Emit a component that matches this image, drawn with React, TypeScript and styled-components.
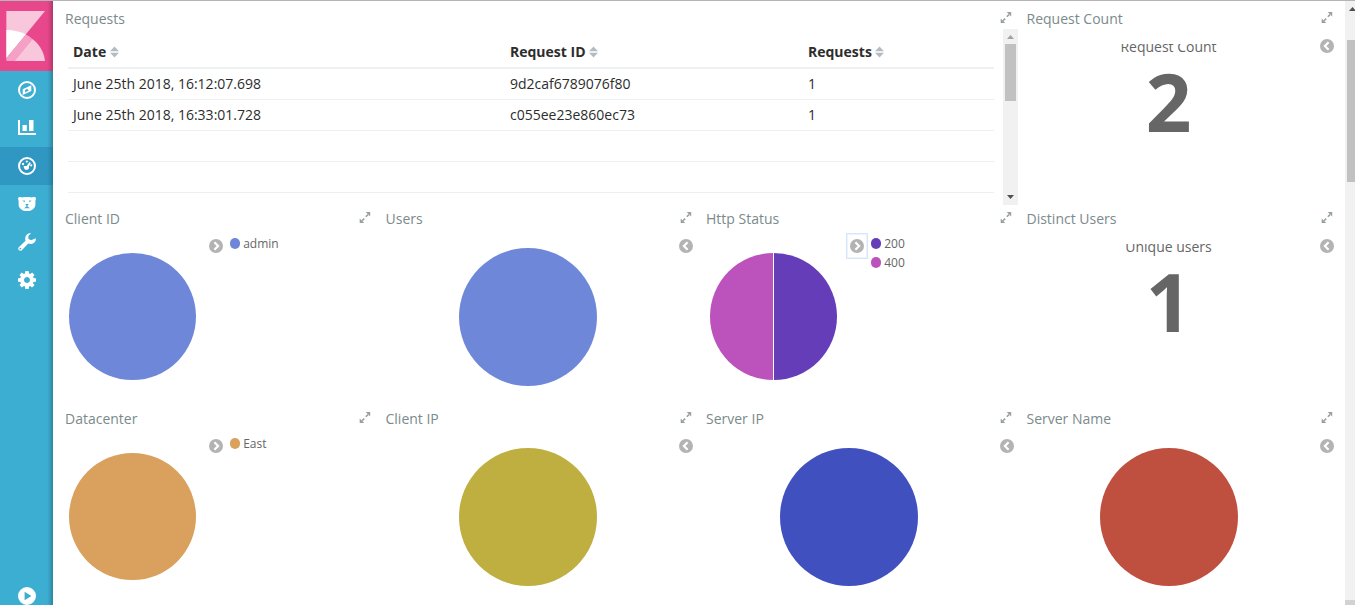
import React from 'react';
import styled, { createGlobalStyle } from 'styled-components';

const GlobalStyle = createGlobalStyle`
  *, *::before, *::after { box-sizing: border-box; }
  body {
    margin: 0;
    background: #fff;
    overflow: hidden;
    font-family: 'Open Sans', 'Noto Sans', sans-serif;
    font-size: 14px;
    color: #2d2d2d;
  }
`;

const Shell = styled.div`
  display: flex;
  height: 605px;
  overflow: hidden;
  border-top: 1px solid #b5b5b5;
`;

const Sidebar = styled.nav`
  display: flex;
  flex-direction: column;
  flex: none;
  width: 53px;
  height: 604px;
  background: linear-gradient(to left, rgba(0, 0, 0, 0.24), rgba(0, 0, 0, 0.1) 3px, rgba(0, 0, 0, 0) 6px), #3caed2;
`;

const LogoBox = styled.div`
  flex: none;
  height: 70px;
  padding: 10px 0 0 6px;
  background: linear-gradient(to left, rgba(0, 0, 0, 0.24), rgba(0, 0, 0, 0.1) 3px, rgba(0, 0, 0, 0) 6px), #e8488b;
  svg { display: block; }
`;

const NavItem = styled.a<{ $active?: boolean; $last?: boolean }>`
  display: flex;
  flex: none;
  align-items: center;
  height: 38px;
  padding-left: 18px;
  margin-top: ${p => (p.$last ? 'auto' : '0')};
  margin-bottom: ${p => (p.$last ? '-10px' : '0')};
  background: ${p => (p.$active ? 'rgba(20, 100, 155, 0.3)' : 'transparent')};
  color: #fff;
  svg { display: block; }
`;

const Dashboard = styled.main`
  display: grid;
  flex: none;
  grid-template-columns: repeat(4, 320.5px);
  grid-template-rows: repeat(3, 200px);
  width: 1292px;
  padding: 4px 0 0 7px;
`;

const PanelBox = styled.section<{ $wide?: boolean }>`
  display: flex;
  flex-direction: column;
  grid-column: span ${p => (p.$wide ? 3 : 1)};
  min-width: 0;
  overflow: hidden;
`;

const PanelHeader = styled.header`
  display: flex;
  flex: none;
  justify-content: space-between;
  height: 24px;
  padding: 0 9.5px 0 5px;
  color: #7b8a8b;
  line-height: 28px;
  white-space: nowrap;
  svg { display: block; margin-top: 7px; }
`;

const PanelBody = styled.div`
  display: flex;
  flex: 1;
  min-height: 0;
  padding-left: 5px;
`;

const Chart = styled.div<{ $compact?: boolean }>`
  display: flex;
  flex: none;
  align-items: center;
  justify-content: center;
  width: ${p => (p.$compact ? 135 : 285)}px;
  padding-bottom: ${p => (p.$compact ? 1 : 0)}px;
`;

const Toggle = styled.button<{ $compact?: boolean; $focused?: boolean }>`
  display: flex;
  flex: none;
  align-items: center;
  justify-content: center;
  width: 22px;
  height: 26px;
  margin: 4px 0 0 ${p => (p.$compact ? 4.7 : 4.5)}px;
  padding: 0;
  border: 1px solid ${p => (p.$focused ? '#d6e5fc' : 'transparent')};
  box-shadow: ${p => (p.$focused ? 'inset 0 0 0 1px #eef4fe' : 'none')};
  background: none;
  color: #b3b3b3;
`;

const Legend = styled.ul`
  margin: 5px 0 0 3px;
  padding: 0;
  list-style: none;
`;

const LegendItem = styled.li`
  display: flex;
  align-items: center;
  height: 19px;
  color: #666;
  font-size: 12px;
  line-height: 19px;
`;

const Swatch = styled.span<{ $color: string }>`
  width: 10.5px;
  height: 10.5px;
  margin-right: 3px;
  border-radius: 50%;
  background: ${p => p.$color};
`;

const Metric = styled.div`
  flex: none;
  width: 284px;
  height: 150px;
  margin: 15px 1px 0 0;
  overflow: hidden;
  color: #666;
  text-align: center;
`;

const MetricLabel = styled.div`
  margin-top: -7px;
  line-height: 20px;
`;

const MetricValue = styled.div`
  font-size: 80px;
  font-weight: 700;
  line-height: 88px;
`;

const TableArea = styled.div`
  display: flex;
  flex: 1;
  justify-content: space-between;
  min-height: 0;
  padding: 0 3.5px 0 8px;
`;

const Table = styled.div`
  width: 926px;
  padding-top: 7px;
`;

const Row = styled.div<{ $head?: boolean }>`
  display: grid;
  grid-template-columns: 437px 298px 1fr;
  height: ${p => (p.$head ? 33 : 31)}px;
  padding-left: 5px;
  border-bottom: ${p => (p.$head ? 2 : 1)}px solid #ecf0f1;
  font-weight: ${p => (p.$head ? 700 : 400)};
  line-height: ${p => (p.$head ? 32 : 30)}px;
`;

const HeadCell = styled.span`
  display: flex;
  align-items: center;
  gap: 3.5px;
`;

const Scrollbar = styled.div`
  display: flex;
  flex-direction: column;
  align-items: center;
  width: 15px;
  height: 176px;
  padding: 6px 0;
  background: #f1f1f1;
`;

const ScrollThumb = styled.div`
  width: 11px;
  height: 57px;
  margin: 5px 0 auto;
  background: #c1c1c1;
`;

const PageScrollbar = styled.aside`
  display: flex;
  flex: none;
  flex-direction: column;
  width: 10px;
  height: 604px;
  background: #f1f1f1;
  overflow: hidden;
  svg { flex: none; margin: 6px 0 0 4px; }
`;

const PageThumb = styled.div`
  flex: none;
  height: 142px;
  margin: 29px 0 auto 2px;
  background: #c1c1c1;
`;

const ScrollCorner = styled.div`
  flex: none;
  height: 5px;
  background: #d2d2d2;
`;

const Logo = () => (
  <svg width="39" height="50" viewBox="-0.4 0 39 50">
    <path d="M0 0H38.600L0 47Z" fill="#f9c7dc" />
    <path d="M0 19C7 19 14 20.5 19.5 23.5L0 47Z" fill="#fff" />
    <path d="M19.5 23.5C22 24.8 24 26.3 26 28L8 50H0V47Z" fill="#f4a1c5" />
    <path d="M26 28C34 34 37.600 42 38.600 50H8Z" fill="#f9c7dc" />
  </svg>
);

const CompassIcon = () => (
  <svg width="18" height="18" viewBox="0 0 18 18">
    <circle cx="9" cy="9" r="8" fill="none" stroke="currentColor" strokeWidth="2" />
    <path fillRule="evenodd" fill="currentColor" d="M13.3 4.2V10L4.7 14V8.2ZM7 9.3V11.4L10.8 9.4 9 7.7Z" />
  </svg>
);

const ChartIcon = () => (
  <svg width="18" height="18" viewBox="0 0 18 18">
    <path fill="currentColor" d="M0 1H2V14H18V16H0ZM4.5 6H8.800V12H4.5ZM11 1H15.5V12H11Z" />
  </svg>
);

const GaugeIcon = () => (
  <svg width="18" height="18" viewBox="0 0 18 18" fill="currentColor">
    <circle cx="9" cy="9" r="8" fill="none" stroke="currentColor" strokeWidth="2" />
    <circle cx="8.800" cy="4.600" r="1.1" />
    <circle cx="13.200" cy="8.400" r="1.100" />
    <circle cx="5" cy="7" r="1.2" />
    <path d="M11.5 5L12.8 6 10.900 9.4A2.600 2.600 0 1 1 5.900 10.800L5.600 8.900 8.700 9Z" />
  </svg>
);

const BearIcon = () => (
  <svg width="18" height="18" viewBox="0 0 18 18">
    <path
      fillRule="evenodd"
      fill="currentColor"
      d="M0 3.2C.6 2 2.6 1.8 4 2.5 7 1.9 11 1.9 14 2.5 15.4 1.8 17.4 2 18 3.2L17.4 6V9.4C17.2 13.4 14 16 9 16S.8 13.4.6 9.4V6ZM4.2 5.800L6.8 7.3V5.600ZM13.8 5.800L11.2 7.3V5.600ZM7.2 9 8.4 10.400V11.5L6 13.2H12L9.6 11.5V10.400L10.8 9Z"
    />
  </svg>
);

const WrenchIcon = () => (
  <svg width="18" height="18" viewBox="0 0 18 18">
    <path
      fillRule="evenodd"
      fill="currentColor"
      d="M13.2.3 10.4 2.7V5.7L13 7.3 17.8 5.2C18.3 8.4 15.8 11 12.5 11 11.6 11 10.9 10.8 10.3 10.5L3.8 17.2C2.9 18.1 1.8 18 .9 17.1 0 16.2-.1 15.1.8 14.2L7.5 7.7C6.2 3.8 9-.7 13.2.3ZM2.4 14.7A.9.9 0 1 0 2.4 16.5 .9.9 0 1 0 2.4 14.7Z"
    />
  </svg>
);

const GearIcon = () => (
  <svg width="18" height="18" viewBox="0 0 1536 1536">
    <path
      fill="currentColor"
      d="M1024 768q0-106-75-181t-181-75-181 75-75 181 75 181 181 75 181-75 75-181zm512-109v222q0 12-8 23t-20 13l-185 28q-19 54-39 91 35 50 107 138 10 12 10 25t-9 23q-27 37-99 108t-94 71q-12 0-26-9l-138-108q-44 23-91 38-16 136-29 186-7 28-36 28h-222q-14 0-24.500-8.500t-11.500-21.500l-28-184q-49-16-90-37l-141 107q-10 9-25 9-14 0-25-11-126-114-165-168-7-10-7-23 0-12 8-23 15-21 51-66.500t54-70.500q-27-50-41-99l-183-27q-13-2-21-12.500t-8-23.500v-222q0-12 8-23t19-13l186-28q14-46 39-92-40-57-107-138-10-12-10-24 0-10 9-23 26-36 98.500-107.500t94.500-71.500q13 0 26 10l138 107q44-23 91-38 16-136 29-186 7-28 36-28h222q14 0 24.500 8.500t11.500 21.500l28 184q49 16 90 37l142-107q9-9 24-9 13 0 25 10 129 119 165 170 7 8 7 22 0 12-8 23-15 21-51 66.500t-54 70.500q26 50 41 98l183 28q13 2 21 12.500t8 23.500z"
    />
  </svg>
);

const PlayIcon = () => (
  <svg width="18" height="18" viewBox="0 0 18 18">
    <path fillRule="evenodd" fill="currentColor" d="M9 0A9 9 0 1 0 9 18 9 9 0 1 0 9 0ZM6.6 4.8 13.4 9 6.6 13.2Z" />
  </svg>
);

const ExpandIcon = () => (
  <svg width="12" height="12" viewBox="0 0.4 12 12">
    <path d="M3 9.200 5.200 7M6.800 5.200 9 3" stroke="#979fa3" strokeWidth="1.500" fill="none" />
    <path d="M6.700.5H11.200V5ZM.7 7V11.500H5.200Z" fill="#979fa3" />
  </svg>
);

const ChevronIcon = ({ right = false }: { right?: boolean }) => (
  <svg width="14" height="14" viewBox="0 0 14 14">
    <circle cx="7" cy="7" r="7" fill="currentColor" />
    <path
      d={right ? 'M5.400 3.200 9.100 7 5.400 10.800' : 'M8.600 3.200 4.900 7 8.600 10.800'}
      fill="none"
      stroke="#fff"
      strokeWidth="2.200"
    />
  </svg>
);

const SortIcon = () => (
  <svg width="9" height="12" viewBox="0 0 9 12">
    <path d="M4.500.5 9 5.200H0ZM0 6.800H9L4.500 11.500Z" fill="#b4bcc2" />
  </svg>
);

const ArrowIcon = ({ down = false, color }: { down?: boolean; color: string }) => (
  <svg width="7" height="4" viewBox="0 0 7 4">
    <path d={down ? 'M0 0H7L3.500 4Z' : 'M3.500 0 7 4H0Z'} fill={color} />
  </svg>
);

type Slice = { label: string; color: string };

const Pie = ({ radius, slices }: { radius: number; slices: Slice[] }) => {
  const size = radius * 2;
  return (
    <svg width={size} height={size} viewBox={`0 0 ${size} ${size}`}>
      {slices.length === 1 ? (
        <circle cx={radius} cy={radius} r={radius} fill={slices[0].color} />
      ) : (
        <>
          <path d={`M${radius} 0A${radius} ${radius} 0 0 1 ${radius} ${size}Z`} fill={slices[0].color} />
          <path d={`M${radius} 0A${radius} ${radius} 0 0 0 ${radius} ${size}Z`} fill={slices[1].color} />
          <path d={`M${radius} 0V${size}`} stroke="#fff" strokeWidth="1" />
        </>
      )}
    </svg>
  );
};

type PanelProps = { title: string; wide?: boolean; children: React.ReactNode };

const Panel = ({ title, wide, children }: PanelProps) => (
  <PanelBox $wide={wide}>
    <PanelHeader>
      <span>{title}</span>
      <ExpandIcon />
    </PanelHeader>
    {children}
  </PanelBox>
);

type PiePanelProps = { title: string; slices: Slice[]; legend?: boolean; focused?: boolean };

const PiePanel = ({ title, slices, legend = false, focused }: PiePanelProps) => (
  <Panel title={title}>
    <PanelBody>
      <Chart $compact={legend}>
        <Pie radius={legend ? 63.5 : 69} slices={slices} />
      </Chart>
      <Toggle $compact={legend} $focused={focused} aria-label="Toggle legend">
        <ChevronIcon right={legend} />
      </Toggle>
      {legend && (
        <Legend>
          {slices.map(slice => (
            <LegendItem key={slice.label}>
              <Swatch $color={slice.color} />
              {slice.label}
            </LegendItem>
          ))}
        </Legend>
      )}
    </PanelBody>
  </Panel>
);

const MetricPanel = ({ title, label, value }: { title: string; label: string; value: number }) => (
  <Panel title={title}>
    <PanelBody>
      <Metric>
        <MetricLabel>{label}</MetricLabel>
        <MetricValue>{value}</MetricValue>
      </Metric>
      <Toggle aria-label="Toggle legend">
        <ChevronIcon />
      </Toggle>
    </PanelBody>
  </Panel>
);

const rows = [
  ['June 25th 2018, 16:12:07.698', '9d2caf6789076f80', '1'],
  ['June 25th 2018, 16:33:01.728', 'c055ee23e860ec73', '1'],
  ['', '', ''],
  ['', '', ''],
];

export default function App() {
  return (
    <>
      <GlobalStyle />
      <Shell>
        <Sidebar>
          <LogoBox><Logo /></LogoBox>
          <NavItem><CompassIcon /></NavItem>
          <NavItem><ChartIcon /></NavItem>
          <NavItem $active><GaugeIcon /></NavItem>
          <NavItem><BearIcon /></NavItem>
          <NavItem><WrenchIcon /></NavItem>
          <NavItem><GearIcon /></NavItem>
          <NavItem $last><PlayIcon /></NavItem>
        </Sidebar>
        <Dashboard>
          <Panel title="Requests" wide>
            <TableArea>
              <Table>
                <Row $head>
                  {['Date', 'Request ID', 'Requests'].map(name => (
                    <HeadCell key={name}>{name}<SortIcon /></HeadCell>
                  ))}
                </Row>
                {rows.map((cells, i) => (
                  <Row key={i}>
                    {cells.map((cell, j) => <span key={j}>{cell}</span>)}
                  </Row>
                ))}
              </Table>
              <Scrollbar>
                <ArrowIcon color="#a3a3a3" />
                <ScrollThumb />
                <ArrowIcon down color="#505050" />
              </Scrollbar>
            </TableArea>
          </Panel>
          <MetricPanel title="Request Count" label="Request Count" value={2} />
          <PiePanel title="Client ID" legend slices={[{ label: 'admin', color: '#6f87d8' }]} />
          <PiePanel title="Users" slices={[{ label: 'admin', color: '#6f87d8' }]} />
          <PiePanel
            title="Http Status"
            legend
            focused
            slices={[{ label: '200', color: '#663db8' }, { label: '400', color: '#bc52bc' }]}
          />
          <MetricPanel title="Distinct Users" label="Unique users" value={1} />
          <PiePanel title="Datacenter" legend slices={[{ label: 'East', color: '#daa05d' }]} />
          <PiePanel title="Client IP" slices={[{ label: 'client', color: '#bfaf40' }]} />
          <PiePanel title="Server IP" slices={[{ label: 'server', color: '#4050bf' }]} />
          <PiePanel title="Server Name" slices={[{ label: 'name', color: '#bf5040' }]} />
        </Dashboard>
        <PageScrollbar>
          <ArrowIcon color="#505050" />
          <PageThumb />
          <ScrollCorner />
        </PageScrollbar>
      </Shell>
    </>
  );
}
